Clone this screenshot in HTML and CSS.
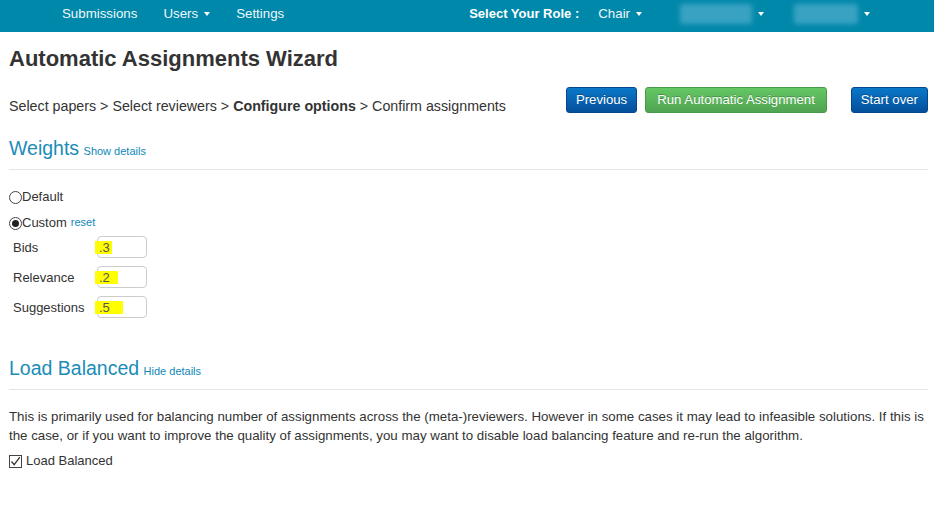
FILE: index.html
```html
<!DOCTYPE html>
<html>
<head>
<meta charset="utf-8">
<link rel="stylesheet" href="styles.css">
</head>
<body>
<div class="navbar">
  <div class="nav-left">
    <span class="nav-item">Submissions</span>
    <span class="nav-item">Users <b class="caret"></b></span>
    <span class="nav-item">Settings</span>
  </div>
  <div class="nav-right">
    <span class="nav-role">Select Your Role :</span>
    <span class="nav-item chair">Chair <b class="caret"></b></span>
    <span class="nav-item blur-item"><span class="blur b1"></span><b class="caret"></b></span>
    <span class="nav-item blur-item"><span class="blur b2"></span><b class="caret"></b></span>
  </div>
</div>
<div class="container">
  <h1 class="title">Automatic Assignments Wizard</h1>
  <div class="wizard-row">
    <div class="crumbs">Select papers &gt; Select reviewers &gt; <b>Configure options</b> &gt; Confirm assignments</div>
    <div class="btns">
      <span class="btn btn-blue">Previous</span>
      <span class="btn btn-green">Run Automatic Assignment</span>
      <span class="btn btn-blue start">Start over</span>
    </div>
  </div>

  <div class="section-head"><span class="sec-title">Weights</span> <span class="link small">Show details</span></div>
  <div class="radio-row r1"><span class="radio"></span>Default</div>
  <div class="radio-row r2"><span class="radio checked"></span>Custom <span class="link small">reset</span></div>
  <div class="weights">
    <div class="w-row"><span class="w-label">Bids</span><span class="w-input"><span class="hl hl3">.3</span></span></div>
    <div class="w-row"><span class="w-label">Relevance</span><span class="w-input"><span class="hl hl2">.2</span></span></div>
    <div class="w-row"><span class="w-label">Suggestions</span><span class="w-input"><span class="hl hl5">.5</span></span></div>
  </div>

  <div class="section-head lb"><span class="sec-title">Load Balanced</span> <span class="link small">Hide details</span></div>
  <p class="desc">This is primarily used for balancing number of assignments across the (meta-)reviewers. However in some cases it may lead to infeasible solutions. If this is the case, or if you want to improve the quality of assignments, you may want to disable load balancing feature and re-run the algorithm.</p>
  <div class="check-row"><span class="checkbox"><svg width="11" height="11" viewBox="0 0 11 11"><path d="M1.5 5.5 L4.2 8.6 L9.8 1.2" fill="none" stroke="#333" stroke-width="1.3"/></svg></span>Load Balanced</div>
</div>
</body>
</html>
```
FILE: styles.css
```css
* { box-sizing: border-box; }
body {
  margin: 0;
  font-family: "Liberation Sans", Arial, sans-serif;
  color: #333;
  background: #fff;
}
.navbar {
  height: 32px;
  background: #0088aa;
  display: flex;
  align-items: center;
  padding-bottom: 6px;
  color: #e8f4f8;
  font-size: 13.3px;
}
.nav-left {
  display: flex;
  padding-left: 62px;
  gap: 26px;
}
.nav-right {
  display: flex;
  align-items: center;
  margin-left: 185px;
}
.nav-item { display: inline-flex; align-items: center; color: #eef7fa; }
.nav-role { font-weight: bold; color: #fff; font-size: 13px; }
.chair { margin-left: 19px; }
.caret {
  display: inline-block;
  width: 0; height: 0;
  border-left: 3.5px solid transparent;
  border-right: 3.5px solid transparent;
  border-top: 4px solid #fff;
  margin-left: 6px;
  margin-top: 1px;
}
.blur-item { margin-left: 38px; }
.blur {
  display: inline-block;
  height: 20px;
  background: #39a2c2;
  filter: blur(2.5px);
  border-radius: 3px;
  margin-top: 1px;
}
.b1 { width: 72px; }
.b2 { width: 64px; }
.blur-item + .blur-item { margin-left: 30px; }

.container { padding: 0 6px 0 9px; }
.title {
  margin: 15px 0 0;
  font-size: 22px;
  line-height: 24px;
  font-weight: bold;
  color: #333;
}
.wizard-row {
  display: flex;
  margin-top: 16px;
  height: 26px;
}
.crumbs {
  font-size: 14.25px;
  line-height: 20px;
  padding-top: 9px;
  flex: 1;
  white-space: nowrap;
}
.btns { display: flex; }
.btn {
  display: inline-block;
  height: 26px;
  line-height: 24px;
  font-size: 13.2px;
  color: #fff;
  padding: 0 9px;
  border-radius: 3px;
  border: 1px solid rgba(0,0,0,0.15);
  text-shadow: 0 -1px 0 rgba(0,0,0,0.25);
}
.btn-blue { background: linear-gradient(#0a78c8, #044f9c); border-color: #04478c; }
.btn-green { background: linear-gradient(#64c764, #51a351); border-color: #4a9a4a; margin-left: 8px; padding: 0 11px; }
.start { margin-left: 24px; }

.section-head {
  margin-top: 24px;
  padding-bottom: 7px;
  border-bottom: 1px solid #e5e5e5;
  line-height: 22px;
}
.sec-title { font-size: 19.5px; color: #1a8cb6; }
.link { color: #0f88b8; }
.small { font-size: 11px; }

.radio-row {
  display: flex;
  align-items: center;
  font-size: 13px;
  height: 16px;
}
.radio-row .small { margin-left: 4px; }
.r1 { margin-top: 18px; }
.r2 { margin-top: 10px; }
.radio {
  width: 13px; height: 13px;
  border: 1px solid #444;
  border-radius: 50%;
  background: #fff;
  margin-top: 2px;
  display: inline-flex;
  align-items: center;
  justify-content: center;
}
.radio.checked::after {
  content: "";
  width: 7px; height: 7px;
  border-radius: 50%;
  background: #222;
}
.weights { padding-left: 4px; margin-top: 6px; }
.w-row {
  display: flex;
  align-items: center;
  height: 22px;
  margin-bottom: 8px;
  font-size: 13px;
}
.w-label { width: 84px; }
.w-input {
  width: 50px;
  height: 22px;
  border: 1px solid #ccc;
  border-radius: 4px;
  display: flex;
  align-items: center;
  font-size: 13px;
  color: #555;
}
.hl {
  background: #ffff00;
  margin-left: -3px;
  padding-left: 4px;
  height: 13px;
  line-height: 13px;
  display: inline-block;
}
.hl3 { width: 17px; }
.hl2 { width: 23px; }
.hl5 { width: 28px; }

.lb { margin-top: 39px; }
.desc {
  margin: 17px 0 0;
  font-size: 13.3px;
  line-height: 19px;
}
.check-row {
  display: flex;
  align-items: center;
  font-size: 13px;
  margin-top: 7px;
}
.checkbox {
  width: 13px; height: 13px;
  border: 1px solid #444;
  margin-right: 4px;
  margin-top: 3px;
  display: inline-flex;
  align-items: center;
  justify-content: center;
}
```
